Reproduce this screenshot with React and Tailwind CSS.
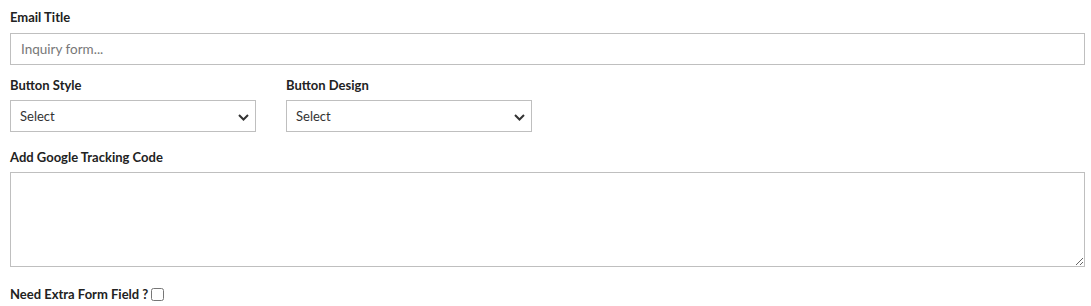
import React from "react";

function Chevron() {
  return (
    <svg width="11" height="7" viewBox="0 0 11 7" className="pointer-events-none absolute right-[6px] top-[13px]">
      <path d="M1 1 L5.5 5.5 L10 1" fill="none" stroke="#333" strokeWidth="2" />
    </svg>
  );
}

function SelectBox() {
  return (
    <div className="relative w-[246px] h-[32px] border border-[#bfbfbf] bg-white">
      <div className="pl-[9px] leading-[30px] text-[13px] text-[#333]">Select</div>
      <Chevron />
    </div>
  );
}

export default function App() {
  const label = "block h-[20px] leading-[20px] text-[13px] font-bold text-[#222]";
  return (
    <div className="bg-white w-[1091px] h-[306px] overflow-hidden pl-[10px] pr-[6px] pt-[7px] font-['Lato',sans-serif]">
      <div className={label}>Email Title</div>
      <div className="mt-[6px] h-[32px] border border-[#bfbfbf] flex items-center pl-[10px] text-[13.5px] text-[#777]">
        Inquiry form...
      </div>
      <div className="mt-[10px] flex gap-[30px]">
        <div>
          <div className={label}>Button Style</div>
          <div className="mt-[5px]"><SelectBox /></div>
        </div>
        <div>
          <div className={label}>Button Design</div>
          <div className="mt-[5px]"><SelectBox /></div>
        </div>
      </div>
      <div className="mt-[15px]">
        <div className={label}>Add Google Tracking Code</div>
        <textarea className="mt-[5px] block w-full h-[95px] border border-[#bfbfbf] outline-none" />
      </div>
      <div className="mt-[17px] flex items-center gap-[3px]">
        <span className={label}>Need Extra Form Field ?</span>
        <input type="checkbox" className="m-0 w-[13px] h-[13px]" />
      </div>
    </div>
  );
}
